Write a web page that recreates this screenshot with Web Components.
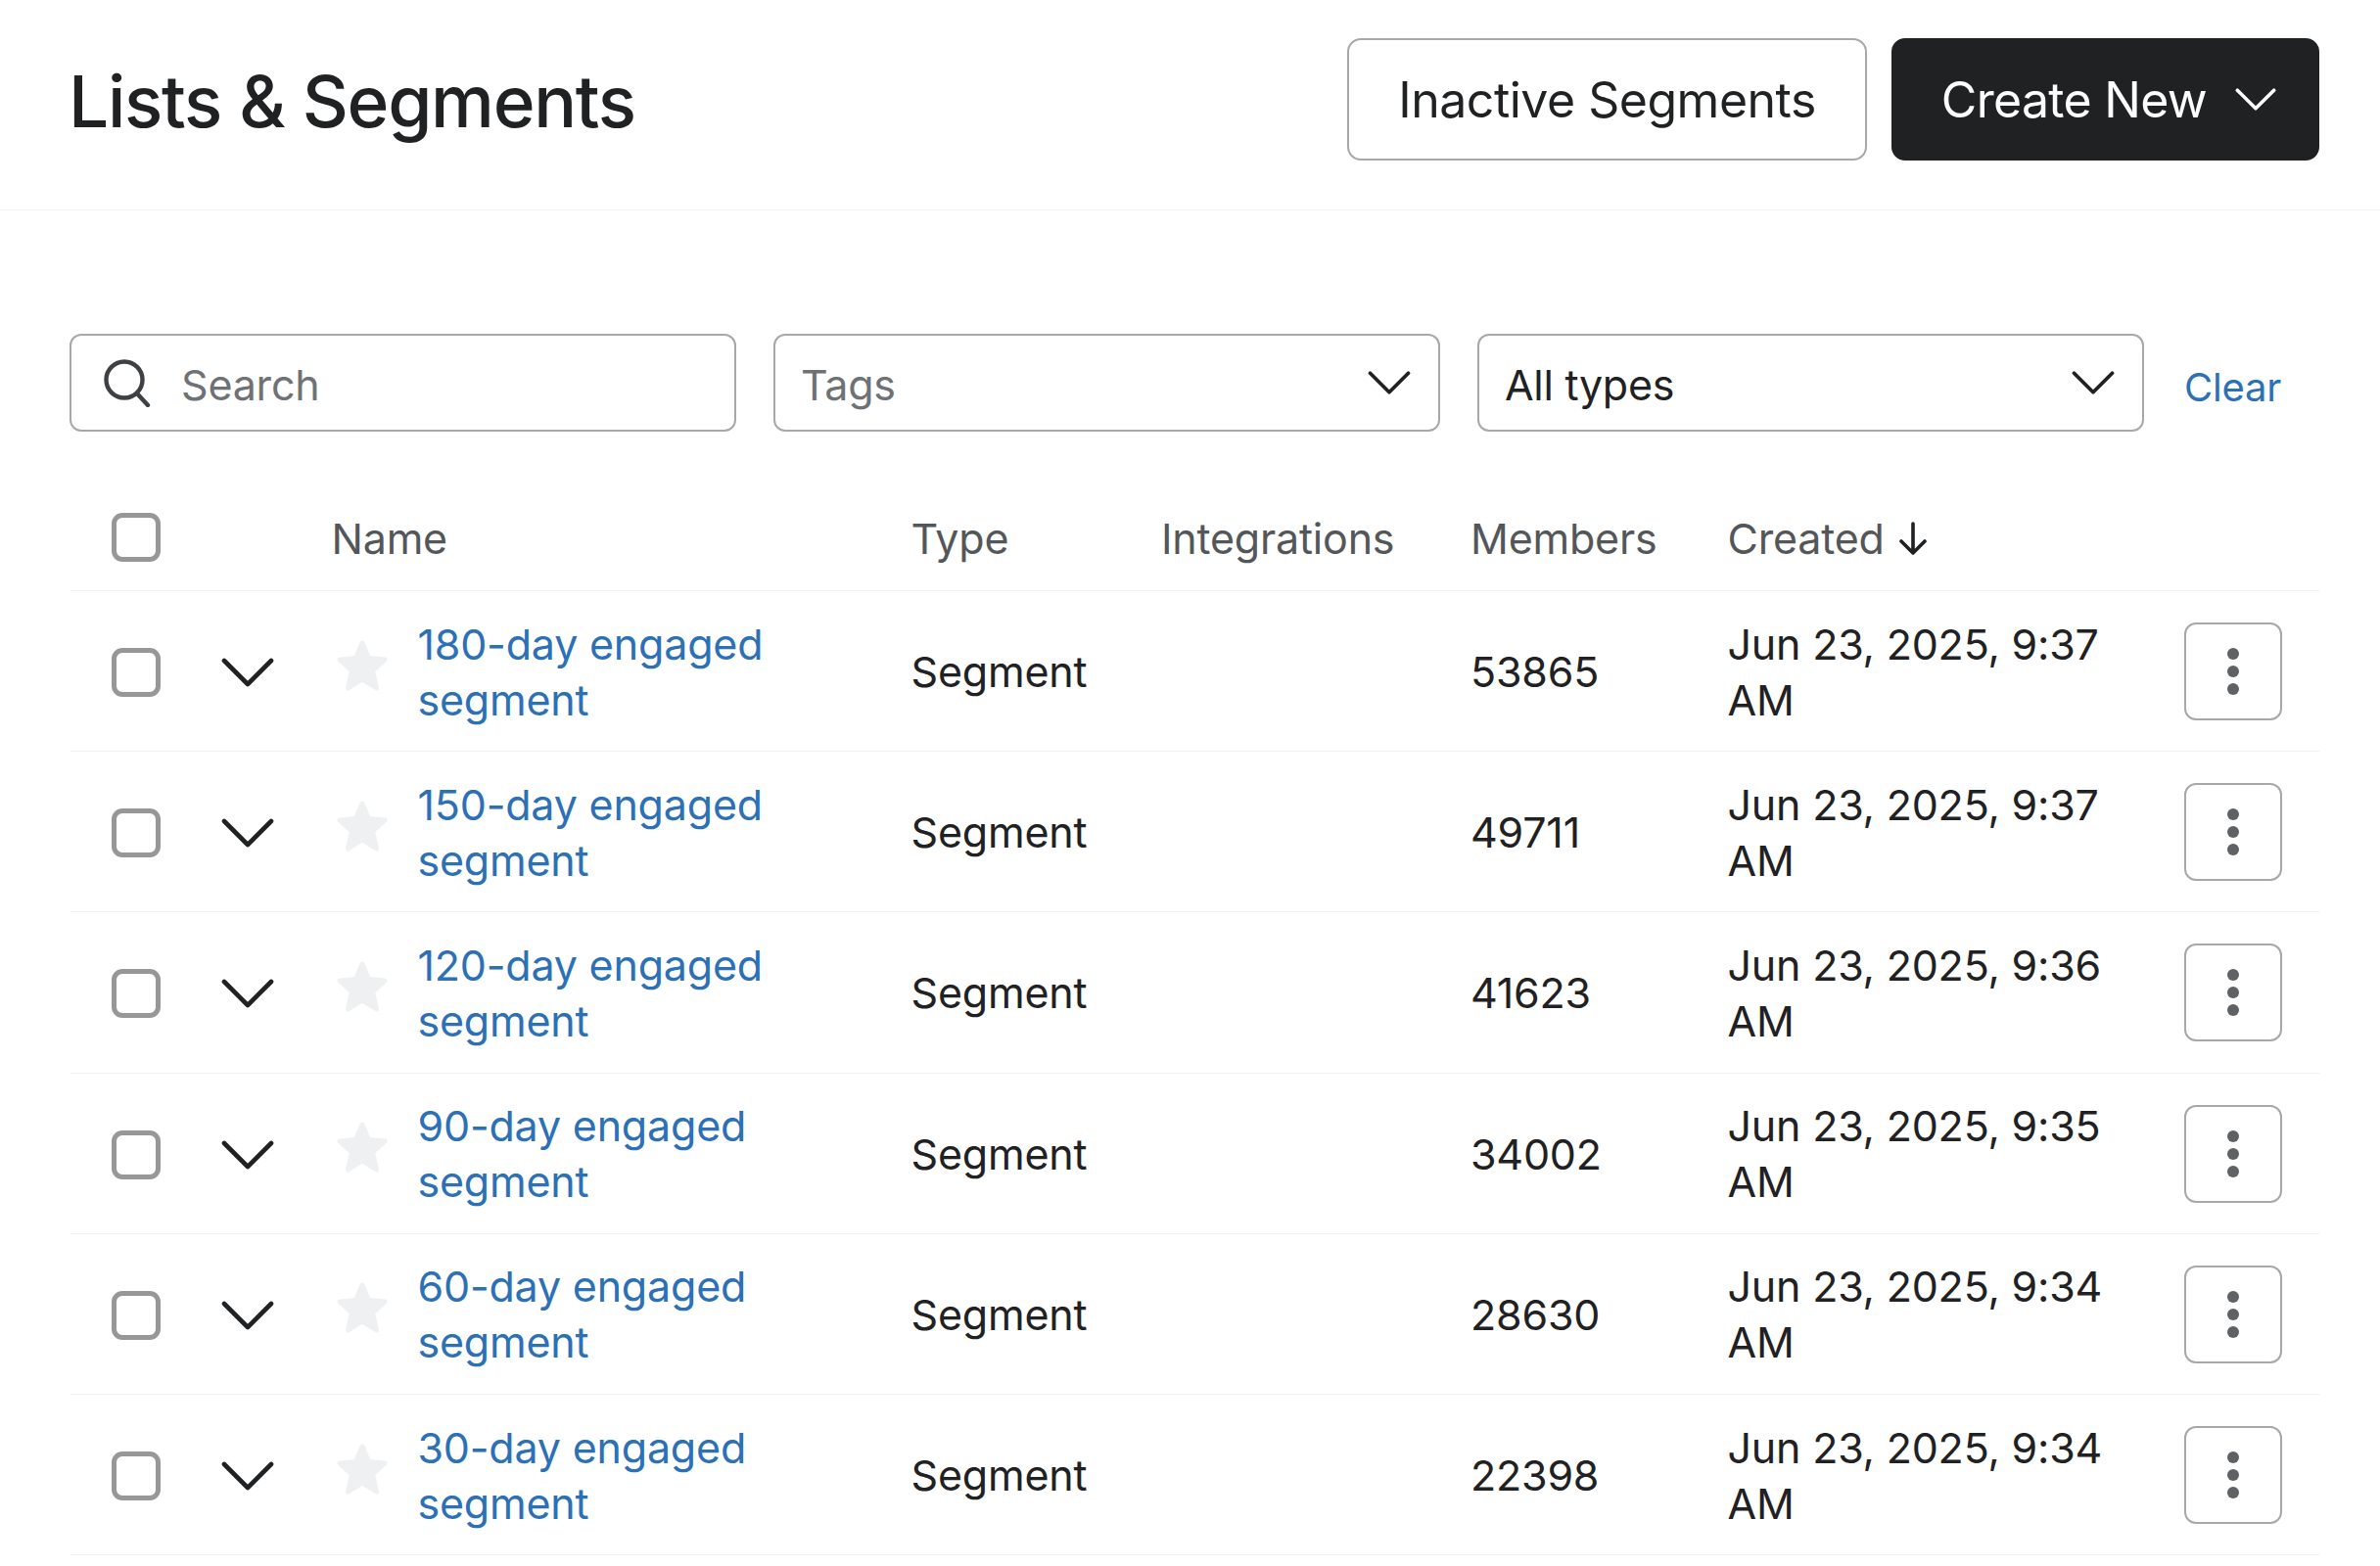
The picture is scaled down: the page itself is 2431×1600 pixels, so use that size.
<!DOCTYPE html>
<html lang="en">
<head>
<meta charset="utf-8">
<title>Lists &amp; Segments</title>
<style>
    html, body { margin: 0; background: #fff; }
    body { font-family: Inter, "Liberation Sans", sans-serif; color: #1f2123; }
</style>
</head>
<body>
<page-header heading="Lists &amp; Segments">
    <action-button>Inactive Segments</action-button>
    <action-button primary menu>Create New</action-button>
</page-header>

<filter-bar>
    <search-box placeholder="Search"></search-box>
    <select-box placeholder>Tags</select-box>
    <select-box>All types</select-box>
    <a href="#" slot="clear">Clear</a>
</filter-bar>

<segment-table>
    <segment-row>
        <a slot="name" href="#">180-day engaged segment</a>
        <span slot="type">Segment</span>
        <span slot="members">53865</span>
        <span slot="created">Jun 23, 2025, 9:37 AM</span>
    </segment-row>
    <segment-row>
        <a slot="name" href="#">150-day engaged segment</a>
        <span slot="type">Segment</span>
        <span slot="members">49711</span>
        <span slot="created">Jun 23, 2025, 9:37 AM</span>
    </segment-row>
    <segment-row>
        <a slot="name" href="#">120-day engaged segment</a>
        <span slot="type">Segment</span>
        <span slot="members">41623</span>
        <span slot="created">Jun 23, 2025, 9:36 AM</span>
    </segment-row>
    <segment-row>
        <a slot="name" href="#">90-day engaged segment</a>
        <span slot="type">Segment</span>
        <span slot="members">34002</span>
        <span slot="created">Jun 23, 2025, 9:35 AM</span>
    </segment-row>
    <segment-row>
        <a slot="name" href="#">60-day engaged segment</a>
        <span slot="type">Segment</span>
        <span slot="members">28630</span>
        <span slot="created">Jun 23, 2025, 9:34 AM</span>
    </segment-row>
    <segment-row>
        <a slot="name" href="#">30-day engaged segment</a>
        <span slot="type">Segment</span>
        <span slot="members">22398</span>
        <span slot="created">Jun 23, 2025, 9:34 AM</span>
    </segment-row>
</segment-table>

<script>
const CHEVRON = '<svg viewBox="0 0 54 32" fill="none" stroke="currentColor" stroke-width="4.6" stroke-linecap="round" stroke-linejoin="round"><path d="M3 4 L27 28 L51 4"/></svg>';

// Shared grid for the table header and every row
const COLUMNS = 'grid-template-columns: 266.5px 592px 255.5px 316px 262.5px 466.5px 138px;';

class PageHeader extends HTMLElement {
    constructor() {
        super();
        this.attachShadow({ mode: 'open' });
        this.shadowRoot.innerHTML = `
            <style>
                :host { display: block; height: 214px; border-bottom: 1.5px solid #f0f0f0; }
                .bar { display: flex; align-items: flex-start; justify-content: space-between; padding: 39px 62px 0 70px; }
                h1 { margin: 0; padding-top: 23px; font-size: 73px; line-height: 84px; font-weight: 500; letter-spacing: -1.3px; color: #1f2123; }
                .actions { display: flex; gap: 25px; }
            </style>
            <div class="bar">
                <h1></h1>
                <div class="actions"><slot></slot></div>
            </div>`;
        this.shadowRoot.querySelector('h1').textContent = this.getAttribute('heading');
    }
}

class ActionButton extends HTMLElement {
    constructor() {
        super();
        this.attachShadow({ mode: 'open' });
        const chevron = this.hasAttribute('menu') ? `<span class="chev">${CHEVRON}</span>` : '';
        this.shadowRoot.innerHTML = `
            <style>
                :host { display: block; }
                .btn { box-sizing: border-box; height: 125px; padding: 0 50px; display: flex; align-items: center; gap: 29px;
                       border: 2px solid #a8a8a8; border-radius: 14px; background: #fff; color: #1f2123;
                       font-size: 50px; letter-spacing: -0.5px; white-space: nowrap; }
                :host([primary]) .btn { background: #1f2123; border-color: #1f2123; color: #fff; padding-left: 49px; padding-right: 42px; letter-spacing: -0.7px; }
                .chev { display: block; width: 42px; height: 25px; }
                .chev svg { display: block; width: 100%; height: 100%; }
            </style>
            <div class="btn"><slot></slot>${chevron}</div>`;
    }
}

class FilterBar extends HTMLElement {
    constructor() {
        super();
        this.attachShadow({ mode: 'open' });
        this.shadowRoot.innerHTML = `
            <style>
                :host { display: flex; align-items: flex-start; gap: 38px; padding: 126px 62px 0 71px; }
                .clear { display: block; padding: 31px 0 0 3px; font-size: 40px; line-height: 48px; letter-spacing: -0.2px; }
                ::slotted(a) { color: #2c70b6; text-decoration: none; }
            </style>
            <slot></slot>
            <div class="clear"><slot name="clear"></slot></div>`;
    }
}

class SearchBox extends HTMLElement {
    constructor() {
        super();
        this.attachShadow({ mode: 'open' });
        this.shadowRoot.innerHTML = `
            <style>
                :host { display: flex; box-sizing: border-box; width: 681px; height: 100px; align-items: center; gap: 31px;
                        padding-left: 31px; border: 2px solid #a8a8a8; border-radius: 12px; }
                svg { display: block; width: 50px; height: 50px; }
                span { font-size: 43px; letter-spacing: -0.2px; color: #6f7275; padding-top: 4px; }
            </style>
            <svg viewBox="0 0 50 50" fill="none" stroke="#3e4144" stroke-width="4.4" stroke-linecap="round"><circle cx="23" cy="22" r="18.5"/><path d="M36 36 L47 48"/></svg>
            <span></span>`;
        this.shadowRoot.querySelector('span').textContent = this.getAttribute('placeholder');
    }
}

class SelectBox extends HTMLElement {
    constructor() {
        super();
        this.attachShadow({ mode: 'open' });
        this.shadowRoot.innerHTML = `
            <style>
                :host { display: flex; box-sizing: border-box; width: 681px; height: 100px; align-items: center; justify-content: space-between;
                        padding: 0 28px 0 26px; border: 2px solid #a8a8a8; border-radius: 12px; font-size: 43px; letter-spacing: -0.3px; color: #1f2123; }
                :host([placeholder]) { color: #6f7275; }
                .text { padding-top: 4px; }
                .chev { display: block; width: 44px; height: 26px; color: #1f2123; }
                .chev svg { display: block; width: 100%; height: 100%; }
            </style>
            <span class="text"><slot></slot></span>
            <span class="chev">${CHEVRON}</span>`;
    }
}

class SegmentTable extends HTMLElement {
    constructor() {
        super();
        this.attachShadow({ mode: 'open' });
        this.shadowRoot.innerHTML = `
            <style>
                :host { display: block; margin: 56px 62px 0 72px; font-size: 43px; letter-spacing: -0.2px; }
                .head { display: grid; ${COLUMNS} align-items: center; height: 107px; box-sizing: border-box;
                        border-bottom: 1.5px solid #f0f0f0; color: #54575a; }
                .box { box-sizing: border-box; width: 50px; height: 50px; margin: -2px 0 0 42px; border: 5px solid #979797; border-radius: 11px; }
                .sort { display: flex; align-items: center; gap: 14px; }
                .sort svg { display: block; width: 30px; height: 34px; color: #1f2123; }
            </style>
            <div class="head">
                <div class="box"></div>
                <div>Name</div>
                <div>Type</div>
                <div>Integrations</div>
                <div>Members</div>
                <div class="sort">Created
                    <svg viewBox="0 0 30 34" fill="none" stroke="currentColor" stroke-width="3.6" stroke-linecap="round" stroke-linejoin="round"><path d="M15 2 V32 M3 20 L15 32 L27 20"/></svg>
                </div>
                <div></div>
            </div>
            <slot></slot>`;
    }
}

class SegmentRow extends HTMLElement {
    constructor() {
        super();
        this.attachShadow({ mode: 'open' });
        this.shadowRoot.innerHTML = `
            <style>
                :host { display: grid; ${COLUMNS} align-items: center; height: 164.2px; box-sizing: border-box; padding-top: 2px;
                        border-bottom: 1.5px solid #f0f0f0; line-height: 57px; color: #1f2123; }
                .lead { display: flex; align-items: center; padding-top: 1px; }
                .box { box-sizing: border-box; width: 50px; height: 50px; margin-left: 42px; border: 5px solid #979797; border-radius: 11px; }
                .chev { display: block; width: 54px; height: 32px; margin-left: 62px; }
                .chev svg { display: block; width: 100%; height: 100%; }
                .name { display: flex; align-items: center; }
                .star { display: block; width: 54px; height: 54px; margin: -14px 30px 0 4px; flex: none; }
                .link { display: block; width: 390px; }
                ::slotted(a) { color: #2c70b6; text-decoration: none; }
                .date { width: 440px; }
                .more { box-sizing: border-box; width: 100px; height: 100px; margin-top: -1px; display: flex; align-items: center; justify-content: center;
                        border: 2px solid #a8a8a8; border-radius: 12px; }
                .more svg { display: block; width: 14px; height: 50px; }
            </style>
            <div class="lead"><div class="box"></div><span class="chev">${CHEVRON}</span></div>
            <div class="name">
                <svg class="star" viewBox="0 0 54 54"><path fill="#eef0f1" stroke="#eef0f1" stroke-width="5" stroke-linejoin="round" d="M27 4 L33.5 19.5 L50 21 L37.5 32.5 L41.5 50 L27 41 L12.5 50 L16.5 32.5 L4 21 L20.5 19.5 Z"/></svg>
                <span class="link"><slot name="name"></slot></span>
            </div>
            <div><slot name="type"></slot></div>
            <div></div>
            <div><slot name="members"></slot></div>
            <div class="date"><slot name="created"></slot></div>
            <div class="more"><svg viewBox="0 0 14 50" fill="#5f6265"><circle cx="7" cy="7" r="6"/><circle cx="7" cy="25" r="6"/><circle cx="7" cy="43" r="6"/></svg></div>`;
    }
}

customElements.define('page-header', PageHeader);
customElements.define('action-button', ActionButton);
customElements.define('filter-bar', FilterBar);
customElements.define('search-box', SearchBox);
customElements.define('select-box', SelectBox);
customElements.define('segment-table', SegmentTable);
customElements.define('segment-row', SegmentRow);
</script>
</body>
</html>
